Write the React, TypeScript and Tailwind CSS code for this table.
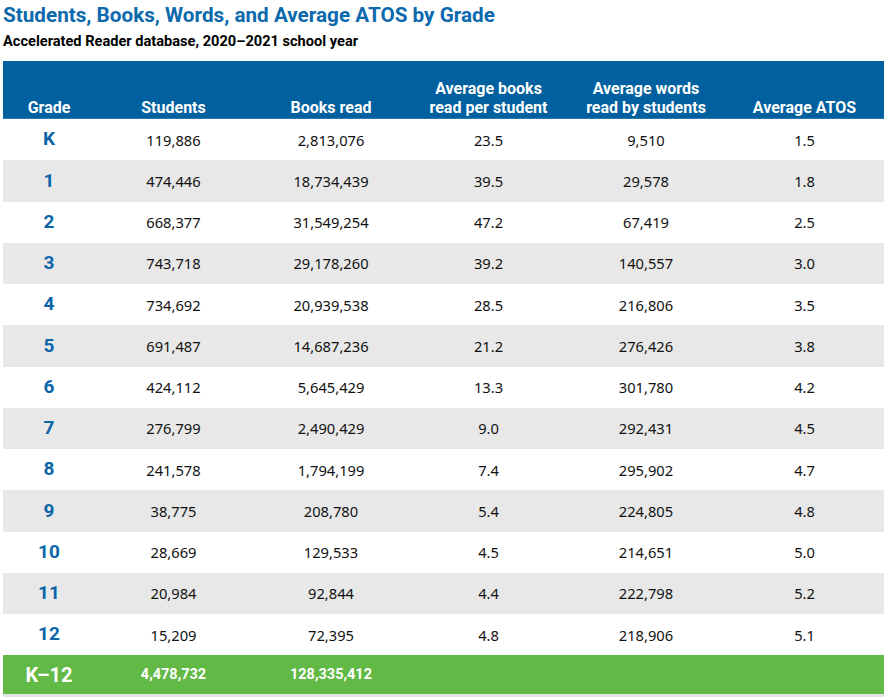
import React from 'react';

type Row = [string, string, string, string, string, string];

const rows: Row[] = [
    ['K', '119,886', '2,813,076', '23.5', '9,510', '1.5'],
    ['1', '474,446', '18,734,439', '39.5', '29,578', '1.8'],
    ['2', '668,377', '31,549,254', '47.2', '67,419', '2.5'],
    ['3', '743,718', '29,178,260', '39.2', '140,557', '3.0'],
    ['4', '734,692', '20,939,538', '28.5', '216,806', '3.5'],
    ['5', '691,487', '14,687,236', '21.2', '276,426', '3.8'],
    ['6', '424,112', '5,645,429', '13.3', '301,780', '4.2'],
    ['7', '276,799', '2,490,429', '9.0', '292,431', '4.5'],
    ['8', '241,578', '1,794,199', '7.4', '295,902', '4.7'],
    ['9', '38,775', '208,780', '5.4', '224,805', '4.8'],
    ['10', '28,669', '129,533', '4.5', '214,651', '5.0'],
    ['11', '20,984', '92,844', '4.4', '222,798', '5.2'],
    ['12', '15,209', '72,395', '4.8', '218,906', '5.1'],
];

const headers = ['Grade', 'Students', 'Books read', 'Average books\nread per student', 'Average words\nread by students', 'Average ATOS'];

const cols = 'grid grid-cols-[92px_157px_158px_157px_158px_159px]';

const App: React.FC = () => {
    return (
        <div className="w-[888px] h-[700px] bg-white overflow-hidden font-['Roboto',sans-serif]">
            <div className="pl-[3px] pt-[2px]">
                <h1 className="text-[20.7px] leading-[27px] font-bold text-[#0b69ad]">
                    Students, Books, Words, and Average ATOS by Grade
                </h1>
                <p className="mt-[2px] text-[14.6px] leading-[20px] font-bold text-black">
                    Accelerated Reader database, 2020–2021 school year
                </p>
            </div>

            <div className="ml-[3px] mt-[10px] w-[881px]">
                {/* encabezado */}
                <div className={`${cols} h-[58px] bg-[#0060a0] text-white`}>
                    {headers.map((h, i) => (
                        <div
                            key={i}
                            className="flex items-end justify-center pb-[1px] text-center text-[16px] leading-[19px] font-bold whitespace-pre-line border-b border-[#2a77ad]"
                        >
                            {h}
                        </div>
                    ))}
                </div>

                {rows.map((row, r) => (
                    <div key={r} className={`${cols} h-[41.25px] ${r % 2 === 1 ? 'bg-[#e8e8e8]' : 'bg-white'}`}>
                        {row.map((cell, c) => (
                            <div
                                key={c}
                                className={
                                    c === 0
                                        ? 'flex items-center justify-center text-[19px] font-bold text-[#0b65a8]'
                                        : "flex items-center justify-center text-[14.7px] text-[#111] font-['Noto_Sans',sans-serif]"
                                }
                            >
                                {cell}
                            </div>
                        ))}
                    </div>
                ))}

                {/* total */}
                <div className={`${cols} h-[42px] bg-[#62b946] text-white font-bold border-b-[3px] border-[#e2e2e2]`}>
                    <div className="flex items-center justify-center text-[20px]">K–12</div>
                    <div className="flex items-center justify-center text-[14.5px]">4,478,732</div>
                    <div className="flex items-center justify-center text-[14.5px]">128,335,412</div>
                    <div />
                    <div />
                    <div />
                </div>
            </div>
        </div>
    );
};

export default App;
